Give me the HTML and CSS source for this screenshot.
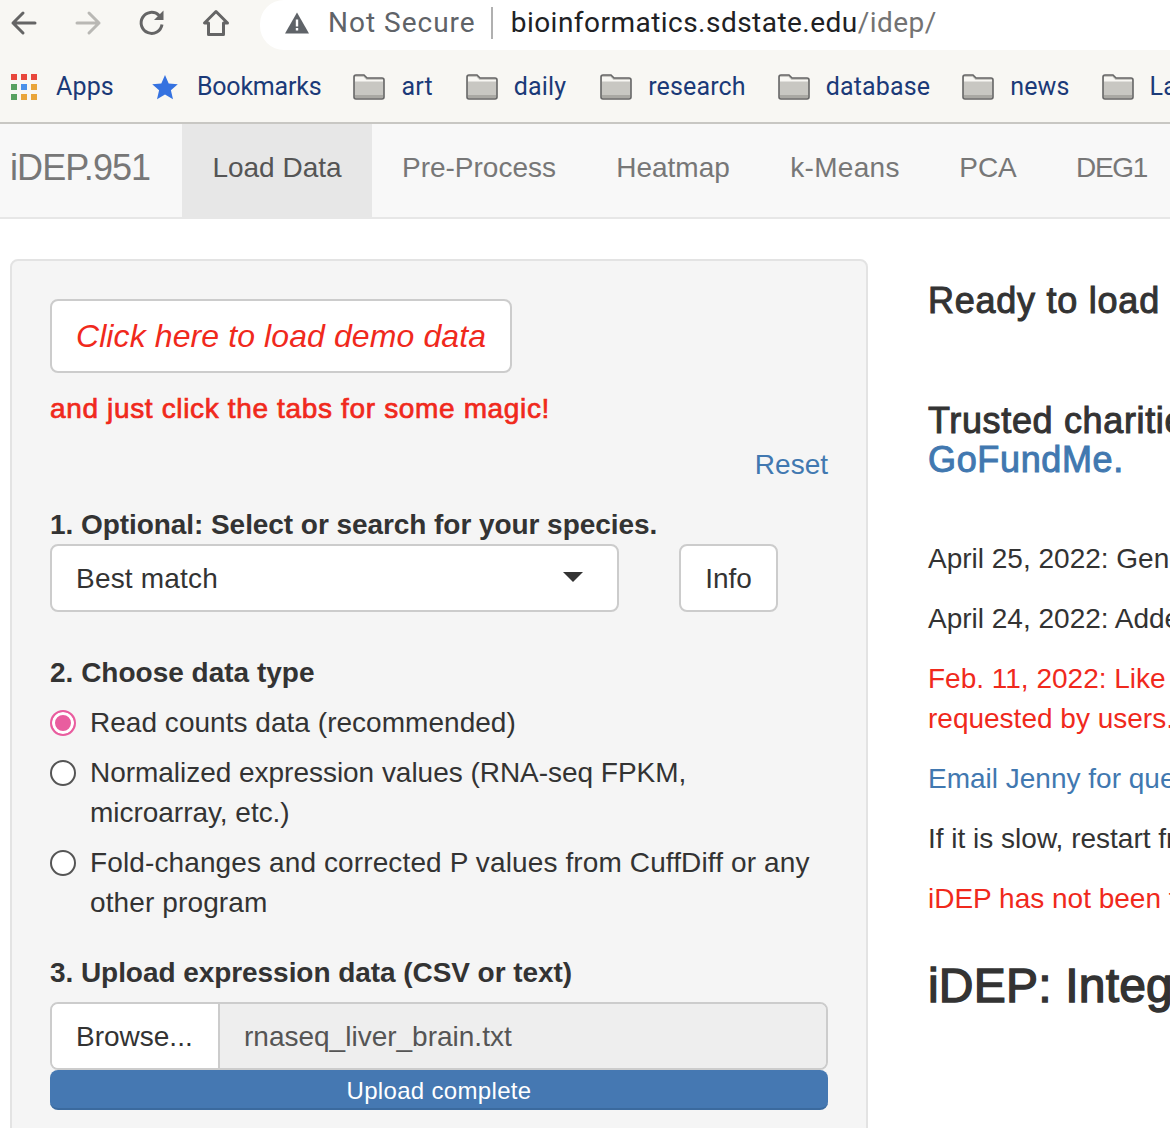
FILE: index.html
```html
<!DOCTYPE html>
<html lang="en">
<head>
<meta charset="utf-8">
<title>iDEP</title>
<link rel="stylesheet" href="styles.css">
</head>
<body>
<header class="chrome">
  <div class="toolbar">
    <div class="nav-icons">
      <svg class="tool" width="28" height="28" viewBox="0 0 28 28"><path d="M25 14H3M13 4L3 14l10 10" fill="none" stroke="#656565" stroke-width="3" stroke-linecap="round" stroke-linejoin="round"/></svg>
      <svg class="tool" width="28" height="28" viewBox="0 0 28 28"><path d="M3 14h22M15 4l10 10-10 10" fill="none" stroke="#b9b8b4" stroke-width="3" stroke-linecap="round" stroke-linejoin="round"/></svg>
      <svg class="tool" width="28" height="28" viewBox="0 0 28 28"><path d="M24 15.500A10.500 10.500 0 1 1 20.800 6.200L24 9" fill="none" stroke="#656565" stroke-width="3"/><path d="M25.500 1.500V11H16z" fill="#656565"/></svg>
      <svg class="tool" width="28" height="28" viewBox="0 0 28 28"><path d="M14 2.500L2.500 14H6.500V25.500H21.500V14H25.500z" fill="none" stroke="#656565" stroke-width="3" stroke-linejoin="round"/></svg>
    </div>
    <div class="omnibox">
      <svg class="warn" width="26" height="24" viewBox="0 0 26 24"><path d="M13 1.500L25 22.500H1z" fill="#5f6368"/><path d="M11.800 8.500h2.400v7h-2.400zM11.800 17h2.400v2.600h-2.400z" fill="#fff"/></svg>
      <span class="secure">Not Secure</span>
      <span class="sep"></span>
      <span class="url">bioinformatics.sdstate.edu<span class="url-path">/idep/</span></span>
    </div>
  </div>
  <nav class="bookmarks">
    <a class="bm bm-apps">
      <span class="apps-grid">
        <i class="r"></i><i class="r"></i><i class="r"></i>
        <i class="g"></i><i class="b"></i><i class="y"></i>
        <i class="g"></i><i class="y"></i><i class="y"></i>
      </span>Apps</a>
    <a class="bm bm-star"><svg width="28" height="26" viewBox="0 0 28 26"><path d="M14 1l3.700 8.400 9.100.9-6.900 6 2.100 8.900L14 20.500l-8 4.700 2.100-8.900-6.900-6 9.100-.9z" fill="#3572e0"/></svg>Bookmarks</a>
    <a class="bm bm-art"><svg class="folder" width="32" height="26" viewBox="0 0 32 26"><use href="#folder"/></svg>art</a>
    <a class="bm bm-daily"><svg class="folder" width="32" height="26" viewBox="0 0 32 26"><use href="#folder"/></svg>daily</a>
    <a class="bm"><svg class="folder" width="32" height="26" viewBox="0 0 32 26"><use href="#folder"/></svg>research</a>
    <a class="bm"><svg class="folder" width="32" height="26" viewBox="0 0 32 26"><use href="#folder"/></svg>database</a>
    <a class="bm"><svg class="folder" width="32" height="26" viewBox="0 0 32 26"><use href="#folder"/></svg>news</a>
    <a class="bm"><svg class="folder" width="32" height="26" viewBox="0 0 32 26"><use href="#folder"/></svg>Labs</a>
  </nav>
  <svg class="defs" width="0" height="0"><defs>
    <g id="folder">
      <path d="M1 3a2 2 0 0 1 2-2h8l3 3h15a2 2 0 0 1 2 2v17a2 2 0 0 1-2 2H3a2 2 0 0 1-2-2z" fill="#c8c7c2" stroke="#666" stroke-width="1.600"/>
      <path d="M2 3h8.500l3 3H30v1.500H2z" fill="#f8f7f3"/>
      <path d="M2 21h28v3H2z" fill="#a9a8a3"/>
    </g>
  </defs></svg>
</header>

<nav class="navbar">
  <span class="brand">iDEP.951</span>
  <a class="tab tab-load active">Load Data</a>
  <a class="tab tab-pre">Pre-Process</a>
  <a class="tab tab-heat">Heatmap</a>
  <a class="tab tab-kmeans">k-Means</a>
  <a class="tab tab-pca">PCA</a>
  <a class="tab tab-deg">DEG1</a>
  <a class="tab tab-deg">DEG2</a>
</nav>

<main class="content">
  <aside class="well">
    <button class="demo">Click here to load demo data</button>
    <p class="magic">and just click the tabs for some magic!</p>
    <div class="reset-row"><a class="link">Reset</a></div>

    <label class="label species-label">1. Optional: Select or search for your species.</label>
    <div class="species-row">
      <div class="select">Best match<span class="caret"></span></div>
      <button class="btn-info">Info</button>
    </div>

    <label class="label type-label">2. Choose data type</label>
    <div class="radio"><span class="dot on"></span><span>Read counts data (recommended)</span></div>
    <div class="radio radio-norm"><span class="dot"></span><span>Normalized expression values (RNA-seq FPKM, microarray, etc.)</span></div>
    <div class="radio radio-fold"><span class="dot"></span><span>Fold-changes and corrected P values from CuffDiff or any other program</span></div>

    <label class="label upload-label">3. Upload expression data (CSV or text)</label>
    <div class="file">
      <span class="browse">Browse...</span>
      <span class="filename">rnaseq_liver_brain.txt</span>
    </div>
    <div class="progress">Upload complete</div>
  </aside>

  <section class="main">
    <h3 class="ready">Ready to load data.</h3>
    <h3 class="charity">Trusted charities for Ukraine via<br><a class="link">GoFundMe.</a></h3>
    <p class="news news-first">April 25, 2022: Gene expression data can now be analyzed.</p>
    <p class="news">April 24, 2022: Added new species and updated annotations.</p>
    <p class="news red">Feb. 11, 2022: Like iDEP? Many new features were<br>requested by users.</p>
    <p class="news"><a class="link">Email Jenny for questions and feedback.</a></p>
    <p class="news">If it is slow, restart from a new browser window.</p>
    <p class="news red">iDEP has not been thoroughly tested.</p>
    <h1 class="title">iDEP: Integrated Differential Expression</h1>
  </section>
</main>
</body>
</html>
```
FILE: styles.css
```css
* { box-sizing: border-box; }
html, body { margin: 0; height: 100%; overflow: hidden; }
body { width: 1170px; height: 1128px; background: #fff; color: #333; font-family: "Liberation Sans", Arial, sans-serif; font-size: 28px; line-height: 40px; }

.chrome { background: #f8f7f3; border-bottom: 2px solid #c8c7c3; height: 124px; }
.toolbar { height: 50px; display: flex; }
.nav-icons { display: flex; align-items: center; gap: 36px; padding-left: 10px; width: 260px; padding-bottom: 4px; }
.tool { flex: none; }
.omnibox { flex: 1; display: flex; align-items: center; background: #fff; border-radius: 24px 0 0 24px; padding-left: 24px; padding-bottom: 4px; white-space: nowrap; overflow: hidden; }
.warn { flex: none; }
.secure { margin-left: 18px; color: #5f6368; font-size: 28px; font-family: Roboto, sans-serif; letter-spacing: 1px; }
.sep { width: 2px; height: 32px; background: #b0b0b0; margin: 0 18px 0 15px; }
.url { color: #202124; font-size: 28px; font-family: Roboto, sans-serif; letter-spacing: 0.47px; }
.url-path { color: #737373; }

.bookmarks { height: 72px; display: flex; align-items: center; gap: 32px; padding: 1px 0 0 11px; white-space: nowrap; overflow: hidden; font-family: Roboto, sans-serif; font-size: 25px; letter-spacing: 0.15px; color: #1b3a78; }
.bm { display: flex; align-items: center; flex: none; }
.bm svg { margin-right: 16px; flex: none; }
.bm-apps { margin-right: 5px; }
.bm-star { letter-spacing: -0.2px; }
.bm-star svg { margin-right: 18px; }
.bm-art { margin-right: 1px; }
.bm-daily { margin-right: 2px; }
.apps-grid { display: grid; grid-template-columns: repeat(3, 6px); gap: 4px; margin-right: 19px; }
.apps-grid i { display: block; width: 6px; height: 6px; }
.apps-grid .r { background: #e8473c; }
.apps-grid .g { background: #58a05f; }
.apps-grid .b { background: #4a90e8; }
.apps-grid .y { background: #e9a53a; }
.defs { position: absolute; }

.navbar { height: 95px; display: flex; background: #f8f8f8; border-bottom: 2px solid #e7e7e7; white-space: nowrap; overflow: hidden; }
.brand { width: 182px; padding: 0 0 0 10px; font-size: 36px; line-height: 88px; color: #777; letter-spacing: -0.9px; flex: none; }
.tab { flex: none; text-align: center; height: 93px; line-height: 88px; color: #777; font-size: 28px; }
.tab-load { width: 190px; }
.tab-pre { width: 214px; }
.tab-heat { width: 174px; }
.tab-kmeans { width: 170px; letter-spacing: 0.3px; }
.tab-pca { width: 116px; }
.tab-deg { width: 131px; letter-spacing: -1.3px; }
.tab.active { background: #e7e7e7; color: #555; }

.content { display: flex; padding: 40px 0 0 10px; width: 1170px; height: 909px; overflow: hidden; }
.well { flex: none; width: 858px; height: 1000px; background: #f5f5f5; border: 2px solid #e3e3e3; border-radius: 8px; padding: 38px; }
.demo { display: block; width: 462px; height: 74px; padding: 0; background: #fff; border: 2px solid #ccc; border-radius: 8px; color: #f0291c; font: italic 32px "Liberation Sans", Arial, sans-serif; letter-spacing: 0.1px; }
.magic { margin: 16px 0 0; color: #f0291c; font-size: 28px; letter-spacing: 0.65px; -webkit-text-stroke: 0.7px #f0291c; }
.reset-row { text-align: right; margin-top: 16px; }
.link { color: #4178b0; }
.label { display: block; font-weight: 700; }
.species-label { margin-top: 20px; letter-spacing: -0.06px; }
.species-row { display: flex; gap: 60px; margin-top: -1px; }
.select { position: relative; width: 569px; height: 68px; background: #fff; border: 2px solid #ccc; border-radius: 8px; padding-left: 24px; line-height: 66px; letter-spacing: 0.2px; }
.caret { position: absolute; right: 34px; top: 26px; border: 10px solid transparent; border-top: 10px solid #333; border-bottom: 0; }
.btn-info { width: 99px; height: 68px; background: #fff; border: 2px solid #ccc; border-radius: 8px; font: 28px "Liberation Sans", Arial, sans-serif; color: #333; padding: 2px 0 0; }
.type-label { margin-top: 41px; margin-bottom: 10px; }
.radio { display: flex; gap: 14px; margin-bottom: 10px; width: 778px; padding-right: 10px; letter-spacing: 0.03px; }
.radio-norm { letter-spacing: -0.03px; }
.radio-fold { letter-spacing: 0.12px; }
.dot { flex: none; width: 26px; height: 26px; margin-top: 7px; background: #fff; border: 2px solid #555; border-radius: 50%; }
.dot.on { border-color: #e95d9f; background: #e95d9f; box-shadow: inset 0 0 0 3px #fff; }
.upload-label { margin-top: 30px; margin-bottom: 9px; letter-spacing: -0.06px; }
.file { display: flex; height: 68px; border: 2px solid #ccc; border-radius: 8px; overflow: hidden; }
.browse { width: 168px; background: #fff; border-right: 2px solid #ccc; padding-left: 24px; line-height: 66px; }
.filename { flex: 1; background: #eee; color: #555; padding-left: 24px; line-height: 66px; }
.progress { height: 40px; background: #4578b2; border-bottom: 2px solid #3b6a9e; border-radius: 8px; color: #fff; text-align: center; font-size: 24px; letter-spacing: 0.33px; line-height: 42px; }

.main { flex: none; width: 1000px; margin-left: 60px; white-space: nowrap; }
.ready { margin: 0; padding-top: 22px; font-size: 36px; line-height: 40px; color: #333; font-weight: 400; letter-spacing: 0.75px; -webkit-text-stroke: 1px #333; }
.charity { margin: 80px 0 0; font-size: 36px; line-height: 39px; font-weight: 400; letter-spacing: 0.65px; -webkit-text-stroke: 1px currentColor; }
.news { margin: 0 0 20px; }
.news-first { margin-top: 60px; }
.red { color: #f0291c; }
.title { margin: 39px 0 0; font-size: 48px; line-height: 56px; font-weight: 400; letter-spacing: 0.2px; -webkit-text-stroke: 1.4px #333; }
```
